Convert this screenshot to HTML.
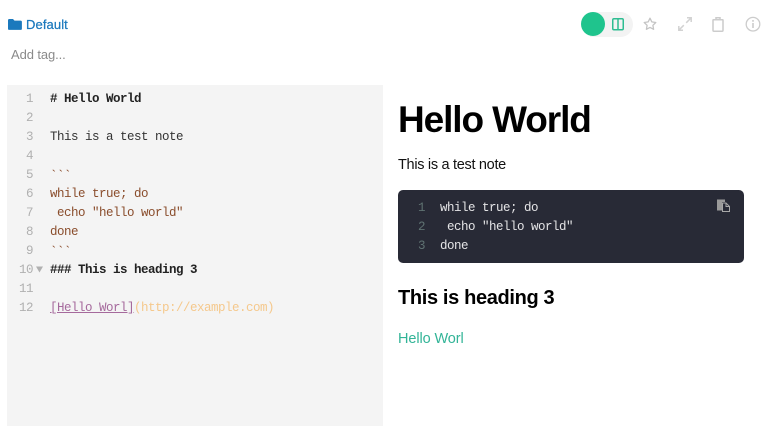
<!DOCTYPE html>
<html>
<head>
<meta charset="utf-8">
<style>
html,body{margin:0;padding:0;background:#fff;}
#r{position:relative;width:778px;height:426px;overflow:hidden;background:#fff;font-family:"Liberation Sans",sans-serif;}
#r div{position:absolute;white-space:pre;}
.m{font-family:"Liberation Mono",monospace;font-size:12.5px;letter-spacing:-.5px;line-height:19px;height:19px;}
.n{color:#b0b0b0;text-align:right;width:20px;left:13px;}
.c{left:50px;color:#333;}
.b{font-weight:bold;color:#222;}
.h{color:#8a4d2c;}
.d{left:440px;color:#e4e4e6;}
.dn{left:405px;width:20px;text-align:right;color:#5f7272;}
</style>
</head>
<body>
<div id="r">
<svg style="position:absolute;left:8px;top:18px" width="14" height="13" viewBox="0 0 14 13"><path d="M0 2.200C0 1.500.5 1 1.200 1H5l1.500 1.600h6.200c.7 0 1.200.5 1.200 1.200v6.900c0 .7-.5 1.200-1.200 1.200H1.200C.5 11.900 0 11.400 0 10.700z" fill="#1b79bd"/></svg>
<div style="left:26px;top:16px;font-size:13px;line-height:18px;color:#1b79bd;letter-spacing:.1px;-webkit-text-stroke:.25px #1b79bd">Default</div>
<div style="left:11px;top:46px;font-size:13px;line-height:18px;color:#8a8a8a;letter-spacing:-.1px">Add tag...</div>

<div style="left:590px;top:12px;width:43px;height:25px;background:#f3f3f3;border-radius:0 13px 13px 0"></div>
<div style="left:581px;top:12px;width:24px;height:24px;border-radius:50%;background:#1fc48d"></div>
<svg style="position:absolute;left:611px;top:17px" width="14" height="15" viewBox="0 0 14 15" fill="none" stroke="#2ebd92" stroke-width="1.500"><rect x="1.750" y="1.750" width="10.500" height="11" rx="1.200"/><path d="M7 2v10.500"/></svg>
<svg style="position:absolute;left:642px;top:16px" width="16" height="16" viewBox="0 0 16 16" fill="none" stroke="#c4c4c4" stroke-width="1.300" stroke-linejoin="round"><path d="M8 2.200l1.800 3.700 4 .6-2.900 2.800.7 4-3.600-1.900-3.600 1.900.7-4L2.200 6.500l4-.6z"/></svg>
<svg style="position:absolute;left:677px;top:16px" width="16" height="16" viewBox="0 0 16 16" fill="none" stroke="#d2d2d2" stroke-width="1.500"><path d="M9.200 6.800L14 2M10 1.800h4.200V6M6.800 9.200L2 14M1.800 10v4.200H6"/></svg>
<svg style="position:absolute;left:710px;top:16px" width="16" height="17" viewBox="0 0 16 17" fill="none" stroke="#cccccc" stroke-width="1.500"><path d="M2.500 3.700h11M6 3.500V1.800h4v1.700M3 4v10.300c0 .6.400 1 1 1h8c.6 0 1-.4 1-1V4"/></svg>
<svg style="position:absolute;left:745px;top:16px" width="16" height="16" viewBox="0 0 16 16" fill="none" stroke="#cccccc" stroke-width="1.300"><circle cx="8" cy="8.200" r="6.800"/><path d="M8 7v5M8 4v1.700" stroke-width="1.600"/></svg>

<div style="left:7px;top:85px;width:376px;height:341px;background:#f4f4f4"></div>

<div class="m n" style="top:90px">1</div>
<div class="m n" style="top:109px">2</div>
<div class="m n" style="top:128px">3</div>
<div class="m n" style="top:147px">4</div>
<div class="m n" style="top:166px">5</div>
<div class="m n" style="top:185px">6</div>
<div class="m n" style="top:204px">7</div>
<div class="m n" style="top:223px">8</div>
<div class="m n" style="top:242px">9</div>
<div class="m n" style="top:261px">10</div>
<div class="m n" style="top:280px">11</div>
<div class="m n" style="top:299px">12</div>
<svg style="position:absolute;left:36px;top:266px" width="7" height="7" viewBox="0 0 7 7"><path d="M0 .5h7L3.500 6.500z" fill="#b0b0b0"/></svg>

<div class="m c b" style="top:90px"># Hello World</div>
<div class="m c" style="top:128px">This is a test note</div>
<div class="m c h" style="top:167px">&#96;&#96;&#96;</div>
<div class="m c h" style="top:185px">while true; do</div>
<div class="m c h" style="top:204px"> echo "hello world"</div>
<div class="m c h" style="top:223px">done</div>
<div class="m c h" style="top:243px">&#96;&#96;&#96;</div>
<div class="m c b" style="top:261px">### This is heading 3</div>
<div class="m c" style="top:299px;color:#a5699c;text-decoration:underline">[Hello Worl]</div>
<div class="m c" style="top:299px;left:134px;color:#f5c88c">(http://example.com)</div>

<div style="left:398px;top:97px;font-size:37px;line-height:46px;font-weight:bold;color:#000;letter-spacing:-1.1px">Hello World</div>
<div style="left:398px;top:156px;font-size:14.500px;line-height:18px;color:#111;letter-spacing:-.3px">This is a test note</div>

<div style="left:398px;top:190px;width:346px;height:73px;background:#282a36;border-radius:5px"></div>
<div class="m dn" style="top:199px">1</div>
<div class="m dn" style="top:218px">2</div>
<div class="m dn" style="top:237px">3</div>
<div class="m d" style="top:199px">while true; do</div>
<div class="m d" style="top:218px"> echo "hello world"</div>
<div class="m d" style="top:237px">done</div>
<svg style="position:absolute;left:716px;top:198px" width="15" height="15" viewBox="0 0 15 15"><path d="M1 1.500h8v2.500h-3v8.500H1z" fill="#9a9a9a"/><path d="M6.500 5H10l3.500 3.500v5h-7z" fill="#282a36" stroke="#a8a8a8" stroke-width="1"/><path d="M10 5v3.500h3.500" fill="none" stroke="#a8a8a8"/></svg>

<div style="left:398px;top:285px;font-size:20px;line-height:26px;font-weight:bold;color:#000;letter-spacing:-.35px">This is heading 3</div>
<div style="left:398px;top:330px;font-size:14.500px;line-height:18px;color:#32b497;letter-spacing:-.1px">Hello Worl</div>
</div>
</body>
</html>
